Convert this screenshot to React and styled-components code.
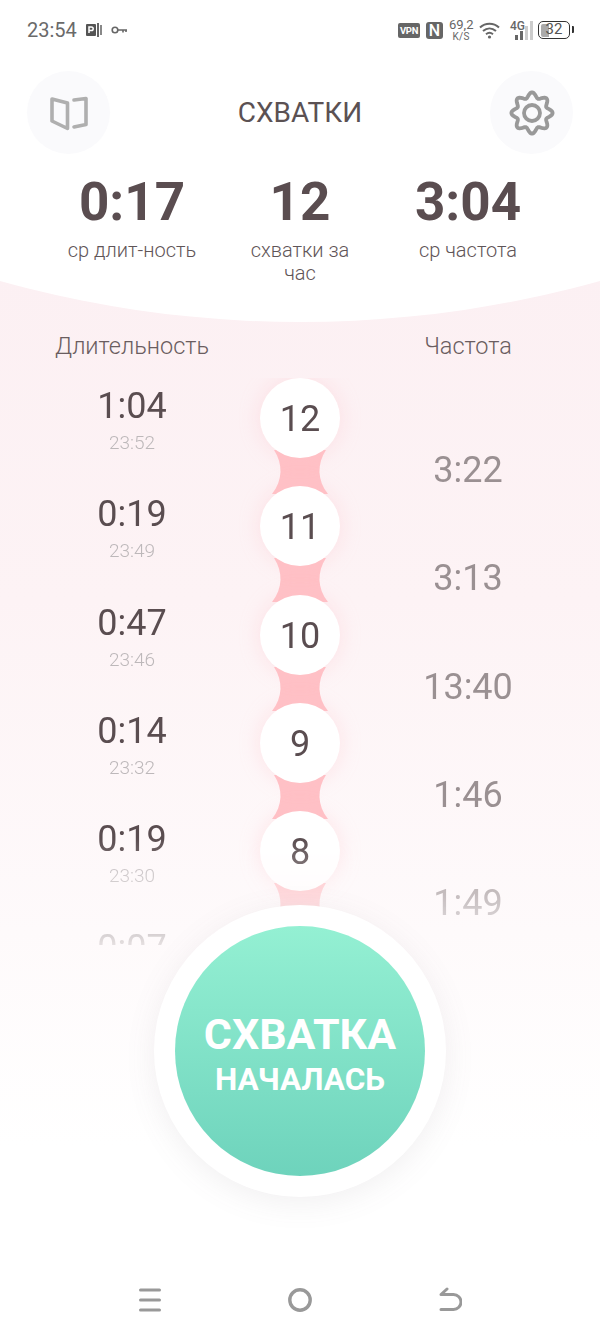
import React from 'react';
import styled, { createGlobalStyle } from 'styled-components';

const GlobalStyle = createGlobalStyle`
  html, body {
    margin: 0;
    padding: 0;
    background: #fff;
    font-family: Roboto, "Noto Sans", sans-serif;
  }
`

const Screen = styled.div`
  position: relative;
  width: 600px;
  height: 1332px;
  overflow: hidden;
  display: flex;
  flex-direction: column;
  background: linear-gradient(180deg, #fcf0f3 20%, #fdf3f5 45%, #fefafb 70%, #fff 86%);
`

const TopPanel = styled.div`
  height: 322px;
  background: #fff;
  clip-path: circle(1118px at 300px -796px);
`

const StatusBar = styled.div`
  height: 60px;
  padding: 0 27px;
  box-sizing: border-box;
  display: flex;
  align-items: center;
  justify-content: space-between;
  color: #666;
`

const StatusGroup = styled.div`
  display: flex;
  align-items: center;
  gap: ${p => p.$gap || 8}px;
`

const Clock = styled.span`
  font-size: 20px;
  color: #6a6a6a;
`

const VpnBadge = styled.span`
  width: 22px;
  height: 15px;
  border-radius: 2px;
  background: #666;
  color: #fff;
  font-size: 9.5px;
  font-weight: 700;
  line-height: 15px;
  text-align: center;
  letter-spacing: -0.3px;
`

const NfcBadge = styled.span`
  width: 17px;
  height: 17px;
  border-radius: 3px;
  background: #666;
  color: #fff;
  font-size: 16px;
  font-weight: 500;
  line-height: 17px;
  text-align: center;
`

const Speed = styled.div`
  width: 24px;
  text-align: center;
  color: #666;
  font-size: 13px;
  line-height: 13px;
  small {
    display: block;
    font-size: 10px;
    line-height: 11px;
    letter-spacing: 0.3px;
  }
`

const Network = styled.div`
  position: relative;
  width: 23px;
  height: 20px;
  margin: 0 -1px 0 4px;
  span {
    position: absolute;
    left: 0;
    top: 0;
    font-size: 12px;
    font-weight: 500;
    line-height: 12px;
    color: #666;
  }
  svg {
    position: absolute;
    right: 0;
    bottom: 0;
  }
`

const Battery = styled.div`
  position: relative;
  width: 32px;
  height: 18px;
  box-sizing: border-box;
  border: 1.5px solid #333;
  border-radius: 5px;
  margin-right: 3px;
  text-align: center;
  font-size: 15px;
  line-height: 15px;
  color: #555;
  &::before {
    content: '';
    position: absolute;
    left: 1.5px;
    top: 1.5px;
    bottom: 1.5px;
    width: 8px;
    border-radius: 2px 0 0 2px;
    background: #aaa;
  }
  &::after {
    content: '';
    position: absolute;
    right: -5px;
    top: 4px;
    width: 2px;
    height: 7px;
    border-radius: 0 1px 1px 0;
    background: #333;
  }
  span {
    position: relative;
  }
`

const Header = styled.div`
  margin-top: 11px;
  padding: 0 27px;
  display: flex;
  align-items: center;
  justify-content: space-between;
`

const RoundButton = styled.button`
  width: 83px;
  height: 83px;
  padding: 0;
  border: none;
  border-radius: 50%;
  background: #fafafc;
  display: flex;
  align-items: center;
  justify-content: center;
`

const Title = styled.div`
  font-size: 28px;
  color: #5b5153;
`

const Stats = styled.div`
  margin-top: 18px;
  padding: 0 48px;
  display: grid;
  grid-template-columns: repeat(3, 1fr);
  text-align: center;
`

const StatValue = styled.div`
  font-size: 53px;
  font-weight: 700;
  line-height: 60px;
  color: #5a4d50;
`

const StatLabel = styled.div`
  margin-top: 7px;
  font-size: 20px;
  font-weight: 300;
  line-height: 23px;
  color: #5f5558;
`

const ColumnTitles = styled.div`
  padding-top: 10px;
  height: 56px;
  box-sizing: border-box;
  display: grid;
  grid-template-columns: 1fr 80px 1fr;
  text-align: center;
  font-size: 23.5px;
  font-weight: 300;
  line-height: 28px;
  color: #6a5d60;
`

const LeftTitle = styled.div`
  padding-left: 4px;
`

const RightTitle = styled.div`
  padding-right: 4px;
`

const List = styled.div`
  height: 567px;
  overflow: hidden;
  -webkit-mask-image: linear-gradient(180deg, #000 460px, rgba(0, 0, 0, 0.5) 525px, rgba(0, 0, 0, 0.15) 567px);
  mask-image: linear-gradient(180deg, #000 460px, rgba(0, 0, 0, 0.5) 525px, rgba(0, 0, 0, 0.15) 567px);
`

const Row = styled.div`
  height: 108.33px;
  display: grid;
  grid-template-columns: 1fr 80px 1fr;
  text-align: center;
`

const DurationCell = styled.div`
  padding: 8px 0 0 4px;
`

const Duration = styled.div`
  font-size: 36px;
  line-height: 40px;
  color: #5a4d50;
`

const StartTime = styled.div`
  margin-top: 5px;
  font-size: 19px;
  font-weight: 300;
  line-height: 24px;
  color: #bdb8ba;
`

const FrequencyCell = styled.div`
  padding: 72px 4px 0 0;
  font-size: 36px;
  line-height: 40px;
  color: #9a9092;
`

const NumberCell = styled.div`
  position: relative;
`

const Connector = styled.svg`
  position: absolute;
  left: 12px;
  top: 72px;
`

const NumberCircle = styled.div`
  position: relative;
  width: 80px;
  height: 80px;
  border-radius: 50%;
  background: #fff;
  box-shadow: 0 0 20px rgba(255, 190, 197, 0.35);
  font-size: 36px;
  line-height: 82px;
  color: #5a4d50;
`

const StartRing = styled.div`
  position: absolute;
  left: 154px;
  top: 905px;
  width: 292px;
  height: 292px;
  border-radius: 50%;
  background: #fff;
  box-shadow: 0 6px 30px rgba(120, 110, 115, 0.1);
  display: flex;
  align-items: center;
  justify-content: center;
`

const StartButton = styled.button`
  width: 250px;
  height: 250px;
  padding: 8px 0 0;
  border: none;
  border-radius: 50%;
  background: linear-gradient(180deg, #94f0d3 0%, #6ed3bc 100%);
  color: #fff;
  font-family: Roboto, sans-serif;
  font-weight: 700;
  display: flex;
  flex-direction: column;
  align-items: center;
  justify-content: center;
`

const StartMain = styled.span`
  font-size: 43px;
  line-height: 50px;
`

const StartSub = styled.span`
  font-size: 31.5px;
  line-height: 42px;
`

const NavBar = styled.div`
  margin-top: auto;
  height: 65px;
  padding: 0 138px;
  display: flex;
  align-items: center;
  justify-content: space-between;
`

const rows = [
  { n: 12, duration: '1:04', time: '23:52', freq: '3:22' },
  { n: 11, duration: '0:19', time: '23:49', freq: '3:13' },
  { n: 10, duration: '0:47', time: '23:46', freq: '13:40' },
  { n: 9, duration: '0:14', time: '23:32', freq: '1:46' },
  { n: 8, duration: '0:19', time: '23:30', freq: '1:49' },
  { duration: '0:07' },
]

function gearPath() {
  const points = []
  for (let i = 0; i < 360; i += 3) {
    const a = (i * Math.PI) / 180
    const r = 18 + 2.6 * Math.cos(8 * a)
    points.push(`${(23 + r * Math.sin(a)).toFixed(2)} ${(23 - r * Math.cos(a)).toFixed(2)}`)
  }
  return `M${points.join('L')}Z`
}

function BookIcon() {
  return (
    <svg width="44" height="40" viewBox="0 0 44 40" fill="none" stroke="#afafaf" strokeWidth="3.6" strokeLinejoin="round" strokeLinecap="round">
      <path d="M5 6 L20.5 10 L20.5 35.5 L5 28 Z" />
      <path d="M27 7 L39 5.5 L39 31.5 L27 34" />
    </svg>
  )
}

function GearIcon() {
  return (
    <svg width="46" height="46" viewBox="0 0 46 46" fill="none" stroke="#999" strokeWidth="3.8">
      <path d={gearPath()} strokeLinejoin="round" />
      <circle cx="23" cy="23" r="8" />
    </svg>
  )
}

function ParkIcon() {
  return (
    <svg width="16" height="16" viewBox="0 0 16 16">
      <rect x="0" y="2" width="10" height="12" rx="1" fill="#555" />
      <rect x="11" y="1" width="2" height="14" fill="#666" />
      <rect x="14" y="3" width="2" height="10" fill="#888" />
      <path d="M3 11V5h2.4a1.7 1.7 0 0 1 0 3.6H3" fill="none" stroke="#fff" strokeWidth="1.5" />
    </svg>
  )
}

function KeyIcon() {
  return (
    <svg width="17" height="10" viewBox="0 0 17 10" fill="none" stroke="#666" strokeWidth="1.6">
      <circle cx="4" cy="5" r="2.8" />
      <path d="M7 5H16M12 5V7.5M15 5V7" />
    </svg>
  )
}

function WifiIcon() {
  return (
    <svg width="21" height="17" viewBox="0 0 21 17" fill="none" stroke="#666" strokeWidth="2">
      <path d="M1 5.5C6.5 .5 14.5 .5 20 5.5" />
      <path d="M4 9C8 5.5 13 5.5 17 9" />
      <path d="M7 12.2C9 10.6 12 10.6 14 12.2" />
      <circle cx="10.5" cy="15" r="1.6" fill="#666" stroke="none" />
    </svg>
  )
}

function SignalIcon() {
  return (
    <svg width="18" height="20" viewBox="0 0 18 20">
      <rect x="0" y="15" width="3" height="5" fill="#666" />
      <rect x="5" y="11" width="3" height="9" fill="#666" />
      <rect x="10" y="6" width="3" height="14" fill="#ccc" />
      <rect x="15" y="1" width="3" height="19" fill="#ccc" />
    </svg>
  )
}

function MenuIcon() {
  return (
    <svg width="24" height="26" viewBox="0 0 24 26" stroke="#999" strokeWidth="3" strokeLinecap="round">
      <path d="M2.5 3H21.5M2.5 13H21.5M2.5 23H21.5" />
    </svg>
  )
}

function HomeIcon() {
  return (
    <svg width="24" height="24" viewBox="0 0 24 24" fill="none" stroke="#999" strokeWidth="3.4">
      <circle cx="12" cy="12" r="10.2" />
    </svg>
  )
}

function BackIcon() {
  return (
    <svg width="24" height="26" viewBox="0 0 24 26" fill="none" stroke="#999" strokeWidth="3" strokeLinecap="round" strokeLinejoin="round">
      <path d="M3 22.5H15.5a7.5 7.5 0 0 0 0-15H3L9 2" />
    </svg>
  )
}

export default function App() {
  return (
    <Screen>
      <GlobalStyle />
      <TopPanel>
        <StatusBar>
          <StatusGroup $gap={9}>
            <Clock>23:54</Clock>
            <ParkIcon />
            <KeyIcon />
          </StatusGroup>
          <StatusGroup $gap={6}>
            <VpnBadge>VPN</VpnBadge>
            <NfcBadge>N</NfcBadge>
            <Speed>69,2<small>K/S</small></Speed>
            <WifiIcon />
            <Network>
              <span>4G</span>
              <SignalIcon />
            </Network>
            <Battery><span>32</span></Battery>
          </StatusGroup>
        </StatusBar>
        <Header>
          <RoundButton><BookIcon /></RoundButton>
          <Title>СХВАТКИ</Title>
          <RoundButton><GearIcon /></RoundButton>
        </Header>
        <Stats>
          <div>
            <StatValue>0:17</StatValue>
            <StatLabel>ср длит-ность</StatLabel>
          </div>
          <div>
            <StatValue>12</StatValue>
            <StatLabel>схватки за<br />час</StatLabel>
          </div>
          <div>
            <StatValue>3:04</StatValue>
            <StatLabel>ср частота</StatLabel>
          </div>
        </Stats>
      </TopPanel>
      <ColumnTitles>
        <LeftTitle>Длительность</LeftTitle>
        <div />
        <RightTitle>Частота</RightTitle>
      </ColumnTitles>
      <List>
        {rows.map(row => (
          <Row key={row.duration + row.n}>
            <DurationCell>
              <Duration>{row.duration}</Duration>
              {row.time && <StartTime>{row.time}</StartTime>}
            </DurationCell>
            <NumberCell>
              {row.n && (
                <>
                  <Connector width="56" height="44" viewBox="0 0 56 44">
                    <path d="M2 0H54C45 14 45 30 56 44H0C11 30 11 14 2 0Z" fill="#ffc1c6" />
                  </Connector>
                  <NumberCircle>{row.n}</NumberCircle>
                </>
              )}
            </NumberCell>
            <FrequencyCell>{row.freq}</FrequencyCell>
          </Row>
        ))}
      </List>
      <StartRing>
        <StartButton>
          <StartMain>СХВАТКА</StartMain>
          <StartSub>НАЧАЛАСЬ</StartSub>
        </StartButton>
      </StartRing>
      <NavBar>
        <MenuIcon />
        <HomeIcon />
        <BackIcon />
      </NavBar>
    </Screen>
  )
}
